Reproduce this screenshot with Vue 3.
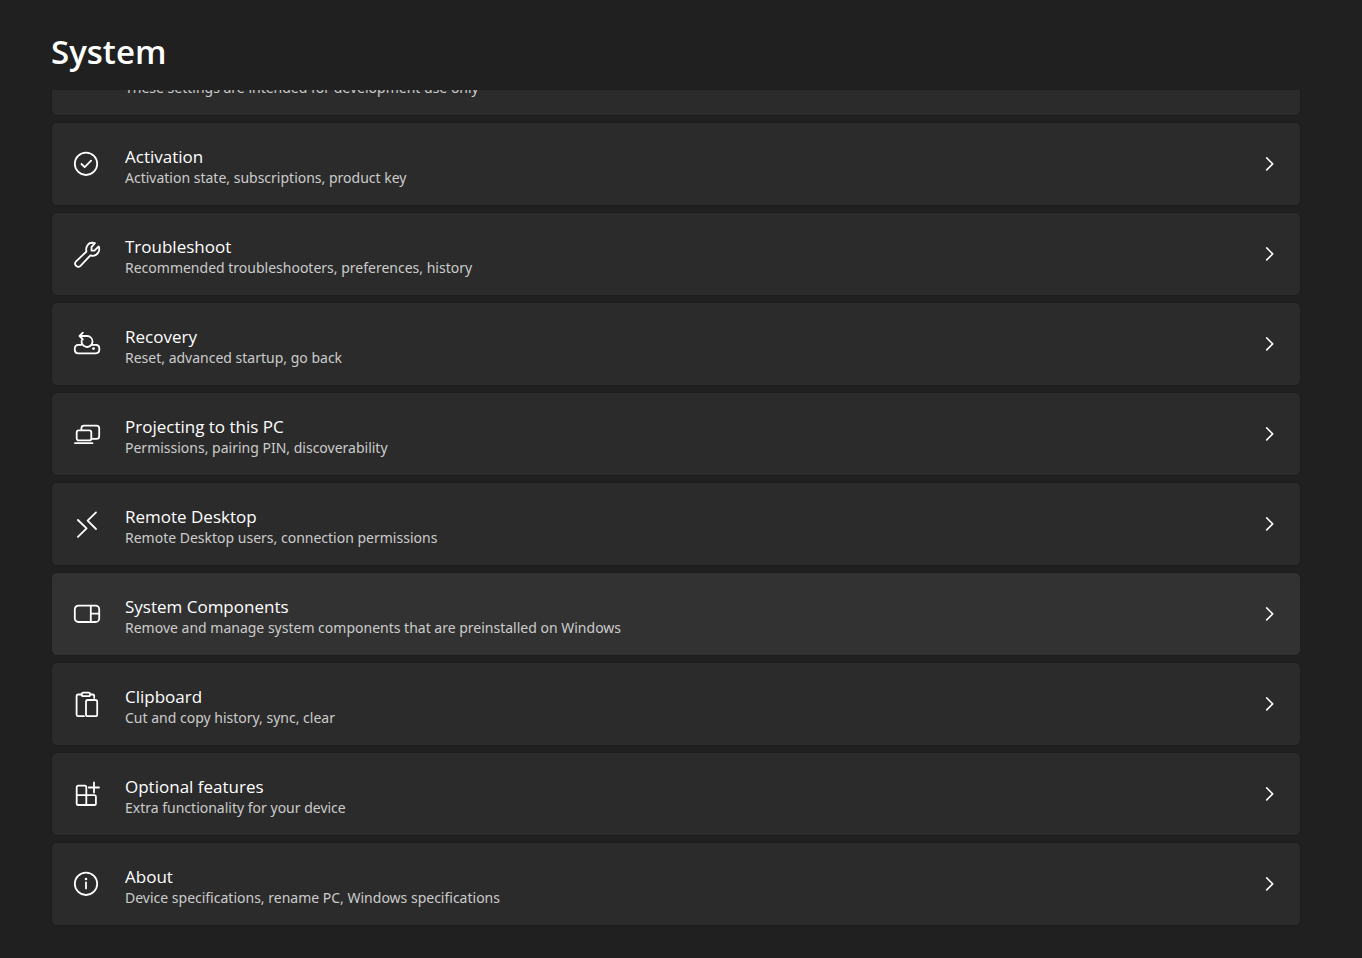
<script setup>
import { ref } from 'vue'

const highlighted = ref('components')

const items = [
  { id: 'developers', title: '', text: 'These settings are intended for development use only' },
  { id: 'activation', title: 'Activation', text: 'Activation state, subscriptions, product key' },
  { id: 'troubleshoot', title: 'Troubleshoot', text: 'Recommended troubleshooters, preferences, history' },
  { id: 'recovery', title: 'Recovery', text: 'Reset, advanced startup, go back' },
  { id: 'projecting', title: 'Projecting to this PC', text: 'Permissions, pairing PIN, discoverability' },
  { id: 'remote', title: 'Remote Desktop', text: 'Remote Desktop users, connection permissions' },
  { id: 'components', title: 'System Components', text: 'Remove and manage system components that are preinstalled on Windows' },
  { id: 'clipboard', title: 'Clipboard', text: 'Cut and copy history, sync, clear' },
  { id: 'features', title: 'Optional features', text: 'Extra functionality for your device' },
  { id: 'about', title: 'About', text: 'Device specifications, rename PC, Windows specifications' }
]
</script>

<template>
  <main class="settings">
    <h1 class="page-title">System</h1>

    <nav class="list" aria-label="System">
      <button
        v-for="item in items"
        :key="item.id"
        type="button"
        class="card"
        :class="{ active: item.id === highlighted }"
        @mouseenter="highlighted = item.id"
      >
        <svg class="icon" viewBox="0 0 30 30" aria-hidden="true">
          <g v-if="item.id === 'activation'">
            <circle cx="14" cy="14.800" r="11.200" />
            <path d="M9.500 15l3.200 3.200 6.400-6.500" />
          </g>
          <g v-else-if="item.id === 'troubleshoot'">
            <path d="M22.900 4.200C19.500 3.200 16.200 4.600 14.800 7.600C14.100 9.200 14 11 14.500 12.500L4.100 22.400A3.100 3.100 0 0 0 8.500 26.800L18.400 16.300C21.400 17.400 24.700 16.300 26.400 13.300C27.400 11.400 27.500 9.200 26.700 7.500L22.400 11.700H19.500V8.100Z" />
          </g>
          <g v-else-if="item.id === 'recovery'">
            <path d="M9.500 15.800H6.200A3.400 3.400 0 0 0 2.800 19.200V21A3.400 3.400 0 0 0 6.200 24.300H24A3.400 3.400 0 0 0 27.300 21V19.200A3.400 3.400 0 0 0 24 15.800H20.500" />
            <path d="M7.500 7H15A5.500 5.500 0 1 1 9.700 11.200M10.900 3.700L7.500 7l3.400 3.300" />
            <circle class="dot" cx="21.500" cy="19.600" r="1.400" />
          </g>
          <g v-else-if="item.id === 'projecting'">
            <path d="M9.400 10.500V9.200A2.600 2.600 0 0 1 12 6.700H24.600A2.600 2.600 0 0 1 27.200 9.300V17.300A2.600 2.600 0 0 1 24.600 19.900H19.800" />
            <rect x="4.700" y="11.400" width="14.600" height="10" rx="2" />
            <path d="M3 24.200H20.500" />
          </g>
          <g v-else-if="item.id === 'remote'">
            <path d="M5.900 11l8.700 8.400-8.700 8.400M24 3.400l-8.400 8.300 8.400 8.300" />
          </g>
          <g v-else-if="item.id === 'components'">
            <rect x="2.800" y="6.700" width="24.400" height="16.300" rx="3.600" />
            <path d="M18.800 6.700V23M18.800 14.700H27.200" />
          </g>
          <g v-else-if="item.id === 'clipboard'">
            <rect x="9.600" y="3.700" width="8.600" height="3.500" rx="1.700" />
            <path d="M9.600 5.500H6.200A1.600 1.600 0 0 0 4.600 7.100V25.700A1.600 1.600 0 0 0 6.200 27.200H12M18.200 5.500H20.600A1.600 1.600 0 0 1 22.200 7.100V9" />
            <rect x="14" y="11" width="11.200" height="16.200" rx="1.800" />
          </g>
          <g v-else-if="item.id === 'features'">
            <path d="M14.300 16V8.200A1.600 1.600 0 0 0 12.700 6.600H6.300A1.600 1.600 0 0 0 4.700 8.200V24.400A1.600 1.600 0 0 0 6.300 26H22.300A1.600 1.600 0 0 0 23.900 24.400V17.800A1.600 1.600 0 0 0 22.300 16.200H4.700M14.300 16V26" />
            <path d="M22 3.400V13.600M16.800 8.500H27" />
          </g>
          <g v-else-if="item.id === 'about'">
            <circle cx="14" cy="14.800" r="11.200" />
            <path d="M14 13.500V19.400" />
            <circle class="dot" cx="14" cy="10" r="1.300" />
          </g>
        </svg>

        <span class="label">
          <span class="title">{{ item.title }}</span>
          <span class="text">{{ item.text }}</span>
        </span>

        <svg class="chevron" viewBox="0 0 10 16" aria-hidden="true">
          <path d="M1.700 1.900L7.700 7.900 1.700 13.900" />
        </svg>
      </button>
    </nav>
  </main>
</template>

<style>
body {
  margin: 0;
  background: #202020;
}
</style>

<style scoped>
.settings {
  box-sizing: border-box;
  display: flex;
  flex-direction: column;
  height: 100vh;
  padding: 28px 61px 0 51px;
  overflow: hidden;
  font-family: 'Open Sans', 'Noto Sans', sans-serif;
  color: #ffffff;
}

.page-title {
  flex: none;
  margin: 0 0 14px;
  font-size: 33px;
  line-height: 48px;
  font-weight: 600;
}

.list {
  display: flex;
  flex-direction: column;
  justify-content: flex-end;
  gap: 6px;
  flex: 1;
  min-height: 0;
  padding-bottom: 32px;
  overflow: hidden;
}

.card {
  box-sizing: border-box;
  display: flex;
  flex: none;
  align-items: center;
  width: 100%;
  height: 84px;
  padding: 0 25px 0 20px;
  border: 1px solid #1d1d1d;
  border-radius: 6px;
  background: #2b2b2b;
  color: inherit;
  font-family: inherit;
  text-align: left;
}

.card.active {
  background: #323232;
}

.icon {
  flex: none;
  width: 30px;
  height: 30px;
  margin-right: 23px;
}

.icon,
.chevron {
  fill: none;
  stroke: #ffffff;
  stroke-linecap: round;
  stroke-linejoin: round;
}

.icon {
  stroke-width: 1.8;
}

.chevron {
  stroke-width: 1.5;
}

.dot {
  fill: #ffffff;
  stroke: none;
}

.label {
  display: flex;
  flex: 1;
  flex-direction: column;
  padding-top: 6px;
  min-width: 0;
}

.title {
  min-height: 22px;
  font-size: 17px;
  line-height: 22px;
}

.text {
  font-family: 'Noto Sans', 'Open Sans', sans-serif;
  font-size: 14px;
  line-height: 20px;
  color: #cccccc;
}

.chevron {
  flex: none;
  width: 10px;
  height: 16px;
}
</style>
